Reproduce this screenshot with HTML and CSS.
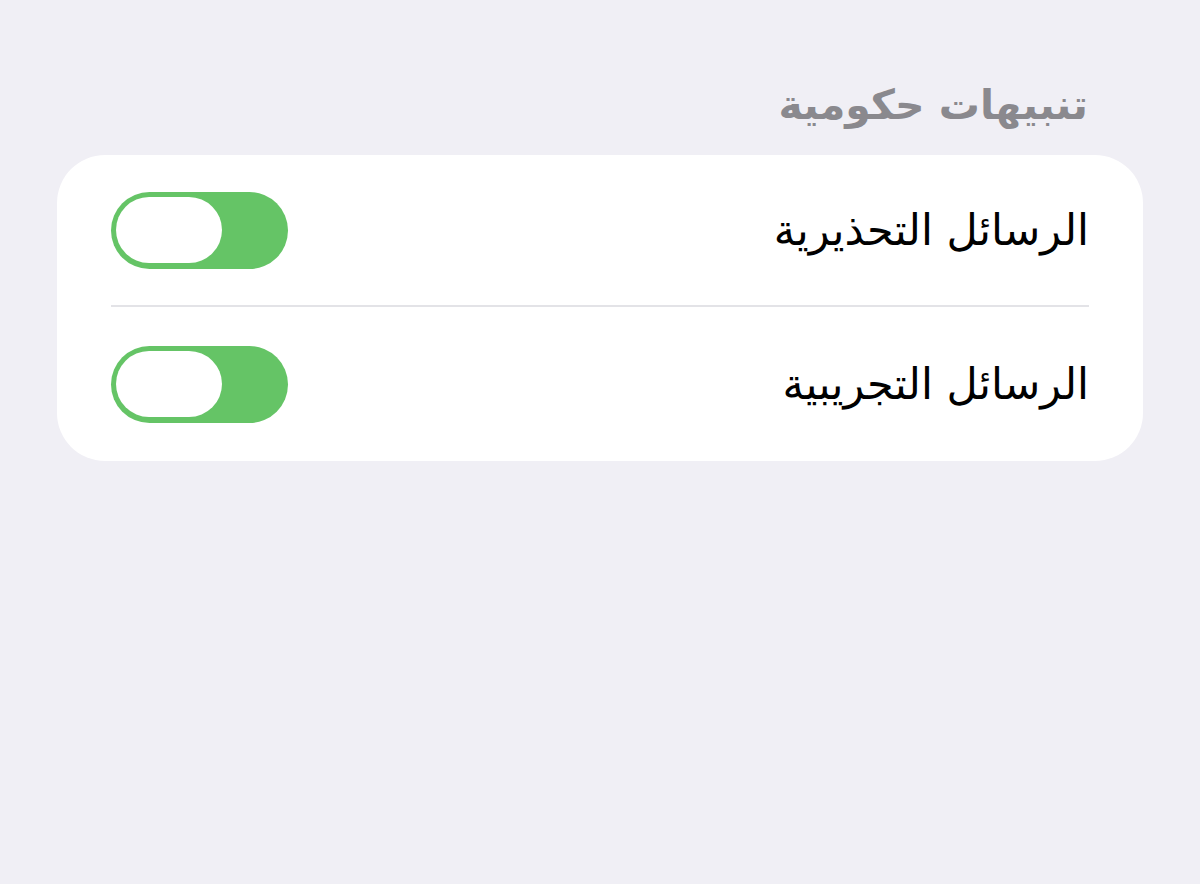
FILE: index.html
```html
<!DOCTYPE html>
<html lang="ar" dir="rtl">
<head>
  <meta charset="UTF-8">
  <meta name="viewport" content="width=device-width, initial-scale=1.0">
  <title>تنبيهات حكومية</title>
  <link rel="stylesheet" href="styles.css">
</head>
<body>

<div class="section">
  <h2 class="section-title">تنبيهات حكومية</h2>

  <div class="group">
    <div class="row">
      <span class="row-label">الرسائل التحذيرية</span>
      <label class="switch">
        <input type="checkbox" checked>
        <span class="knob"></span>
      </label>
    </div>
    <div class="row">
      <span class="row-label">الرسائل التجريبية</span>
      <label class="switch">
        <input type="checkbox" checked>
        <span class="knob"></span>
      </label>
    </div>
  </div>
</div>

</body>
</html>
```

FILE: styles.css
```css
body {
  margin: 0;
  padding: 0;
  background-color: #f0eff5;
  font-family: "DejaVu Sans", "Noto Sans", sans-serif;
  height: 884px;
  overflow: hidden;
}
.section {
  padding: 77px 57px 0;
}
.section-title {
  margin: 0 55px 22px;
  font-size: 41px;
  font-weight: bold;
  color: #8a898e;
  line-height: 56px;
}
.group {
  background: white;
  border-radius: 48px;
  padding: 0 54px;
}
.row {
  display: flex;
  align-items: center;
  justify-content: space-between;
  height: 150px;
  border-bottom: 2px solid #e3e3e7;
}
.row:last-child {
  border-bottom: none;
  height: 154px;
}
.row-label {
  font-size: 43px;
  color: #000;
}
.switch {
  position: relative;
  width: 177px;
  height: 77px;
  border-radius: 39px;
  background-color: #65c466;
  cursor: pointer;
}
.switch input {
  display: none;
}
.switch .knob {
  position: absolute;
  top: 5px;
  left: 5px;
  width: 106px;
  height: 66px;
  border-radius: 34px;
  background: white;
}
```
